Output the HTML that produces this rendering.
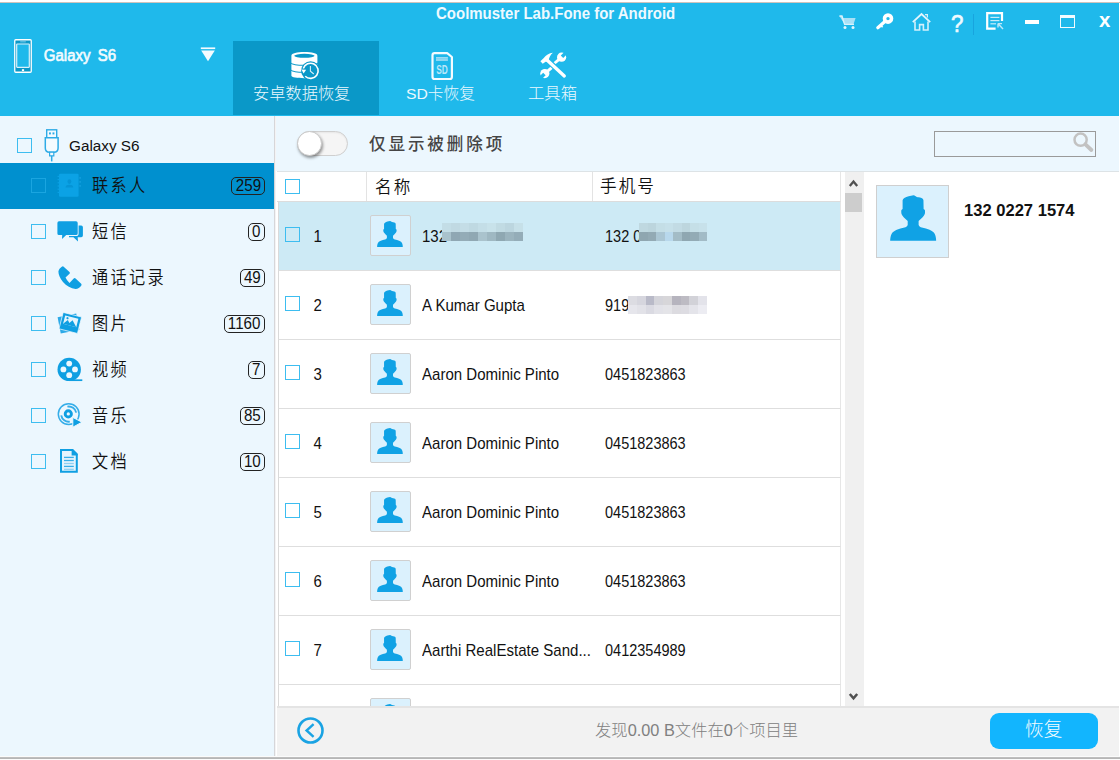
<!DOCTYPE html>
<html lang="zh-CN">
<head>
<meta charset="utf-8">
<title>Coolmuster Lab.Fone for Android</title>
<style>
*{box-sizing:border-box;margin:0;padding:0}
html,body{width:1120px;height:760px;overflow:hidden;background:#fff}
body{position:relative;font-family:"Liberation Sans","Noto Sans CJK SC",sans-serif;font-size:15px;color:#111}
.abs{position:absolute}
.t{position:absolute;white-space:nowrap;line-height:1}
.cjk{font-family:"Liberation Sans","Noto Sans CJK SC",sans-serif}
svg{position:absolute;overflow:visible}
/* frame */
#topline{left:0;top:2px;width:1120px;height:1px;background:#cfc3bc}
#header{left:0;top:3px;width:1119px;height:113px;background:#1fb9eb}
#tabactive{left:233px;top:41px;width:146px;height:74px;background:#0a98c8}
#sidebar{left:0;top:116px;width:274px;height:640px;background:#ecf7fe}
#sideborder{left:274px;top:116px;width:2px;height:640px;background:linear-gradient(90deg,#d6d6d9 0,#d6d6d9 50%,#f3f3f4 50%,#f3f3f4 100%)}
#toolbar{left:276px;top:116px;width:843px;height:55px;background:#ecf7fe}
#toolline{left:277px;top:171px;width:842px;height:1px;background:#dde3e6}
#footer{left:277px;top:706px;width:842px;height:50px;background:#f2f2f2;border-top:2px solid #e4e4e4}
#botline{left:0;top:757px;width:1120px;height:2px;background:linear-gradient(#c2c2c2,#b2b2b2);box-shadow:0 0 1px #d0d0d0}
/* sidebar */
.cb{position:absolute;width:15px;height:15px;border:1px solid #3dbdf0;background:transparent}
.cbw{background:transparent}
#sel{left:0;top:163px;width:274px;height:46px;background:#0090cf}
.lab{position:absolute;left:92.2px;font-size:16px;font-weight:350;letter-spacing:2.3px;line-height:1;white-space:nowrap;color:#111;transform-origin:0 0;transform:scale(1.011,1.14)}
.badge{position:absolute;right:855px;height:18px;border:1px solid #222;border-radius:5px;font-size:15px;line-height:16px;padding:0 3.4px;color:#111;white-space:nowrap}.badge span{display:inline-block;position:relative;top:.8px;transform:scale(1.01,1.095);transform-origin:50% 55%}
/* table */
#thead{left:277px;top:172px;width:564px;height:30px;background:#fff;border-bottom:1px solid #dcdcdc;border-right:1px solid #e6e6e6}
.vsep{position:absolute;top:172px;width:1px;height:29px;background:#e3e3e3}
.row{position:absolute;left:278px;width:563px;height:69px;border-bottom:1px solid #dedede;border-left:1px solid #dadada;border-right:1px solid #e6e6e6;background:#fff}
.row.sel{background:#cdeaf5}
.row .cb{left:6px;top:25px}
.row .num{position:absolute;left:34.5px;top:25.5px;font-size:15px;line-height:1;color:#111;transform-origin:0 0;transform:scale(1,1.093)}
.ava{position:absolute;left:91px;top:13px;width:41px;height:41px;border:1px solid #d0d0d0;background:#dbf1fd;border-radius:2px}
.ava svg{left:6px;top:5px}
.row .nm{position:absolute;left:143px;top:25.5px;font-size:15px;line-height:1;white-space:nowrap;color:#111;transform-origin:0 0;transform:scale(1.003,1.093)}
.row .ph{position:absolute;left:325.5px;top:25.5px;font-size:15px;line-height:1;white-space:nowrap;color:#111;transform-origin:0 0;transform:scale(.967,1.093)}
#scroll{left:845px;top:172px;width:19px;height:534px;background:#f0f0f0}
#thumb{left:845px;top:193px;width:17px;height:19px;background:#cdcdcd}
</style>
</head>
<body>
<div id="topline" class="abs"></div>
<div id="header" class="abs"></div>
<div id="tabactive" class="abs"></div>
<div id="sidebar" class="abs"></div>
<div id="sideborder" class="abs"></div>
<div id="toolbar" class="abs"></div>
<div id="toolline" class="abs"></div>
<div class="abs" id="toggle" style="left:297px;top:131px;width:51px;height:25px;border-radius:13px;background:#f5f5f5;border:1px solid #cfcfcf;box-shadow:inset 0 1px 2px rgba(0,0,0,.06)"></div>
<div class="abs" id="knob" style="left:297px;top:131px;width:25px;height:25px;border-radius:50%;background:#fff;border:1px solid #c9c9c9;box-shadow:1px 2px 3px rgba(0,0,0,.4)"></div>
<div class="t cjk" id="onlydel" style="transform-origin:0 0;left:368.6px;top:136.2px;transform:scale(1.035,1.07);font-size:16px;font-weight:500;letter-spacing:2.8px;color:#454545">仅显示被删除项</div>
<div class="abs" id="search" style="left:934px;top:131px;width:162px;height:26px;border:1px solid #9a9a9a;background:#ecf7fe"></div>
<svg id="ic-mag" style="left:1073px;top:133px" width="21" height="20" viewBox="0 0 21 20"><circle cx="7.6" cy="6.7" r="6.1" fill="none" stroke="#c2c2c2" stroke-width="2.5"/><path d="M12.4 11.3 L18.4 17" stroke="#c2c2c2" stroke-width="3.8" stroke-linecap="round"/></svg>
<div class="t" id="title" style="transform-origin:0 0;left:435.5px;top:5.1px;transform:scale(.999,1.1);font-size:15px;font-weight:bold;color:#eef9ff">Coolmuster Lab.Fone for Android</div>
<!-- device selector -->
<svg id="ic-phone" style="left:14px;top:39px" width="18" height="34" viewBox="0 0 18 34">
  <rect x="0.75" y="0.75" width="16.5" height="32.5" rx="1" fill="#0a98c8" stroke="#fff" stroke-width="1.3"/>
  <rect x="2.7" y="5" width="12.6" height="23.3" rx="0.5" fill="#1fb9eb" stroke="#d8f1fb" stroke-width="1.2"/>
  <rect x="6.2" y="2.4" width="5.6" height="0.9" fill="#7fd0ee"/>
  <rect x="7.9" y="30.2" width="2.2" height="1.9" fill="#fff"/>
</svg>
<div class="t" id="devname" style="transform-origin:0 0;left:43.8px;top:46.6px;transform:scale(1.0,1.069);font-size:15px;font-weight:normal;color:#f2fbff;word-spacing:3px;-webkit-text-stroke:.6px #f2fbff">Galaxy S6</div>
<svg id="ic-drop" style="left:200px;top:47px" width="16" height="15" viewBox="0 0 16 15">
  <rect x="0.8" y="0.4" width="14.4" height="1.7" fill="#f4fbff"/>
  <path d="M1.2 3.4 H14.8 L8 14.2 Z" fill="#f4fbff"/>
</svg>
<!-- tab 1 icon: database + clock -->
<svg id="ic-db" style="left:291px;top:52px" width="29" height="28" viewBox="0 0 29 28">
  <g fill="#fff">
    <path d="M0.4 3.7 C0.4 1.4 6 0.1 13.4 0.1 C20.8 0.1 26.4 1.4 26.4 3.7 V10.4 C26.4 11.8 20.8 12.8 13.4 12.8 C6 12.8 0.4 11.8 0.4 10.4 Z"/>
    <path d="M0.4 11.4 C0.4 12.8 6 13.8 13.4 13.8 C20.8 13.8 26.4 12.8 26.4 11.4 V17.4 C26.4 18.8 20.8 19.8 13.4 19.8 C6 19.8 0.4 18.8 0.4 17.4 Z"/>
    <path d="M0.4 18.4 C0.4 19.8 6 20.8 13.4 20.8 C20.8 20.8 26.4 19.8 26.4 18.4 V23.8 C26.4 25.2 20.8 26.2 13.4 26.2 C6 26.2 0.4 25.2 0.4 23.8 Z"/>
  </g>
  <ellipse cx="13.4" cy="3.8" rx="10.2" ry="2" fill="#0a98c8"/>
  <circle cx="19.6" cy="18.8" r="9.5" fill="#0a98c8"/>
  <path d="M12.3 16.6 A7.6 7.6 0 1 1 14.2 24.2" fill="none" stroke="#fff" stroke-width="1.6"/>
  <path d="M10.4 17.6 L15.2 17.8 L12.6 21.4 Z" fill="#fff"/>
  <path d="M19.4 14 V19.2 L22.8 22" fill="none" stroke="#d6eef8" stroke-width="1.1"/>
</svg>
<div class="t cjk" id="tab1" style="transform-origin:0 0;left:253.33px;top:86px;transform:scale(1.014,1);font-size:16px;color:#eaf8fe;font-weight:300">安卓数据恢复</div>
<!-- tab 2 icon: SD card -->
<svg id="ic-sd" style="left:431px;top:52px" width="23" height="28" viewBox="0 0 23 28">
  <path d="M1.5 3.3 Q1.5 1.2 3.6 1.2 H16.2 L20.9 5 V25 Q20.9 27 18.9 27 H3.6 Q1.5 27 1.5 25 Z" fill="none" stroke="#f4fbff" stroke-width="2.2" stroke-linejoin="round"/>
  <rect x="5" y="5.1" width="11.9" height="1.6" fill="#a9e0f6"/>
  <rect x="5" y="7.2" width="11.9" height="1.6" fill="#a9e0f6"/>
  <text x="11.1" y="22.4" font-family="Liberation Sans, sans-serif" font-size="12.6" font-weight="bold" fill="#b9e7f9" text-anchor="middle" textLength="11.6" lengthAdjust="spacingAndGlyphs">SD</text>
</svg>
<div class="t cjk" id="tab2" style="transform-origin:0 0;left:406.06px;top:86.2px;transform:scale(.982,.97);font-size:16px;color:#eaf8fe;font-weight:300">SD卡恢复</div>
<!-- tab 3 icon: tools -->
<svg id="ic-tools" style="left:540px;top:52px" width="27" height="27" viewBox="0 0 27 27">
  <g stroke="#fff" stroke-width="2.9" fill="none">
    <path d="M13.6 12 L20 6.6"/>
    <path d="M12.6 14.8 L6.2 20.4"/>
  </g>
  <circle cx="21.6" cy="5.2" r="4.6" fill="#fff"/>
  <circle cx="4.8" cy="21.6" r="4.6" fill="#fff"/>
  <path d="M22 4.8 L27 -0.2" stroke="#1fb9eb" stroke-width="3.4"/>
  <path d="M4.4 22 L-0.6 27" stroke="#1fb9eb" stroke-width="3.4"/>
  <path d="M8.6 9.4 L24.4 24" stroke="#1fb9eb" stroke-width="5.6" stroke-linecap="butt"/>
  <path d="M7 8 L24.3 24" stroke="#fff" stroke-width="3.3" stroke-linecap="round"/>
  <path d="M0.4 9.3 L2.7 11.8 L5.6 9.8 L8.4 9.4 C8.8 6 10.2 3 12.9 0.7 C9 0.9 6 3.2 3.8 6 Z" fill="#fff"/>
</svg>
<div class="t cjk" id="tab3" style="transform-origin:0 0;left:527.98px;top:86.2px;transform:scale(1.022,.97);font-size:16px;color:#eaf8fe;font-weight:300">工具箱</div>
<!-- window controls -->
<svg id="ic-cart" style="left:839px;top:15px" width="18" height="15" viewBox="0 0 18 15">
  <path d="M0.4 1 H3 L4 3 H16.6 L14.6 9 H5.4 Z" fill="#a9e0f6"/>
  <path d="M0.4 1 H3 L5.6 9.4 H15" fill="none" stroke="#d9f2fc" stroke-width="1.3"/>
  <circle cx="6" cy="12.4" r="1.5" fill="#e4f6fd"/>
  <circle cx="14" cy="12.4" r="1.5" fill="#e4f6fd"/>
</svg>
<svg id="ic-key" style="left:876px;top:13px" width="18" height="17" viewBox="0 0 18 17">
  <circle cx="12" cy="5.6" r="3.5" fill="none" stroke="#fff" stroke-width="3.6"/>
  <path d="M8.6 8.8 L1.8 14.8" stroke="#fff" stroke-width="3.2" stroke-linecap="round"/>
  <path d="M4.6 12 L6.6 14.2" stroke="#fff" stroke-width="1.6"/>
</svg>
<svg id="ic-home" style="left:912px;top:13px" width="19" height="18" viewBox="0 0 19 18">
  <path d="M0.8 9.2 L9.5 1 L18.2 9.2" fill="none" stroke="#e2f5fd" stroke-width="1.8"/>
  <path d="M3 8.6 V17 H7.6 V11.6 H11.4 V17 H16 V8.6" fill="none" stroke="#d4f0fb" stroke-width="1.6"/>
  <path d="M13 1.6 H15.4 V4.6" fill="none" stroke="#d4f0fb" stroke-width="1.2"/>
</svg>
<div class="t" id="qmark" style="transform-origin:0 0;left:951.16px;top:12.07px;transform:scale(1.116,1.164);font-size:20px;color:#eefaff;-webkit-text-stroke:.55px #eefaff">?</div>
<div class="abs" style="left:973px;top:14px;width:1px;height:21px;background:#18a4de"></div>
<svg id="ic-fb" style="left:986px;top:12px" width="18" height="18" viewBox="0 0 18 18">
  <path d="M16 9 V1.2 H1.2 V16.6 H9.6" fill="none" stroke="#fff" stroke-width="2.2"/>
  <g stroke="#c9ecf9" stroke-width="1.2"><path d="M4.4 5.4 H13.4"/><path d="M4.4 8.6 H13.4"/><path d="M4.4 11.8 H10"/></g>
  <path d="M12 11.6 H16 M12 11.6 V15.6 M12.4 12 L17 17" stroke="#bfe8f8" stroke-width="1.4" fill="none"/>
</svg>
<div class="abs" id="ic-min" style="left:1025px;top:20px;width:14px;height:4px;background:#fff"></div>
<div class="abs" id="ic-max" style="left:1060px;top:15px;width:15px;height:13px;border:1.5px solid #f2fbff;border-top-width:3px"></div>
<div class="t" id="ic-x" style="transform-origin:0 0;left:1099.14px;top:9.3px;transform:scale(1.023,1.03);font-size:20px;font-weight:bold;color:#fff">x</div>
<div class="cb cbw" style="left:17px;top:138px"></div>
<svg id="ic-usb" style="left:44px;top:129px" width="16" height="33" viewBox="0 0 16 33">
  <rect x="2.7" y="0.8" width="10" height="8" fill="#f4fbff" stroke="#2eabe6" stroke-width="1.4"/>
  <rect x="5" y="3.4" width="1.9" height="2" fill="#2eabe6"/><rect x="8.5" y="3.4" width="1.9" height="2" fill="#2eabe6"/>
  <path d="M1.3 8.8 H14.1 V19 Q14.1 23.2 9.9 23.2 H5.5 Q1.3 23.2 1.3 19 Z" fill="#f4fbff" stroke="#2eabe6" stroke-width="1.5"/>
  <path d="M5.6 23.2 H9.8 V26.8 H5.6 Z" fill="#f4fbff" stroke="#2eabe6" stroke-width="1.2"/>
  <path d="M7.7 26.8 V32.4" stroke="#2eabe6" stroke-width="1.5"/>
</svg>
<div class="t" id="sidegal" style="transform-origin:0 0;left:68.5px;top:138px;transform:scale(1.02,1.03);font-size:15px;color:#111">Galaxy S6</div>
<div id="sel" class="abs"></div>
<div class="cb" style="left:31px;top:178px;border-color:#1aa5e0"></div>
<svg id="ic-contacts" style="left:57px;top:173px" width="24" height="24" viewBox="0 0 24 24">
  <rect x="2" y="0.8" width="19.6" height="23" rx="1.2" fill="#0ba2e5"/>
  <g stroke="#0ba2e5" stroke-width="1.1"><path d="M0.6 3.4 H3"/><path d="M0.6 6.6 H3"/><path d="M0.6 9.8 H3"/><path d="M0.6 13 H3"/><path d="M0.6 16.2 H3"/><path d="M0.6 19.4 H3"/></g>
  <rect x="22.4" y="4" width="1.4" height="1.8" fill="#14a0de"/><rect x="22.4" y="8" width="1.4" height="1.8" fill="#14a0de"/><rect x="22.4" y="12" width="1.4" height="1.8" fill="#14a0de"/>
  <ellipse cx="12.4" cy="8.6" rx="1.9" ry="2.4" fill="#0594d6"/>
  <path d="M8.6 14.6 C8.6 12.4 10 11.8 12.4 11.8 C14.8 11.8 16.2 12.4 16.2 14.6 Z" fill="#0594d6"/>
</svg>
<div class="lab cjk" style="top:177.4px">联系人</div>
<div class="badge" style="top:176.5px"><span>259</span></div>
<div class="cb" style="left:31px;top:224px;"></div>
<svg id="ic-sms" style="left:57px;top:221px" width="27" height="22" viewBox="0 0 27 22">
  <path d="M12 4.6 H24.2 Q25.9 4.6 25.9 6.2 V14.6 Q25.9 16.2 24.2 16.2 H20.7 L21 20.4 L16.4 16.2 H12 Z" fill="#0f9fe2"/>
  <path d="M2 0.2 H19 Q20.7 0.2 20.7 1.9 V12.4 Q20.7 14.1 19 14.1 H8.8 L5 17.8 L5.4 14.1 H2 Q0.4 14.1 0.4 12.4 V1.9 Q0.4 0.2 2 0.2 Z" fill="#ecf7fe" stroke="#ecf7fe" stroke-width="1.8"/>
  <path d="M2 0.2 H19 Q20.7 0.2 20.7 1.9 V12.4 Q20.7 14.1 19 14.1 H9.2 L5 18 L5.2 14.1 H2 Q0.4 14.1 0.4 12.4 V1.9 Q0.4 0.2 2 0.2 Z" fill="#0f9fe2"/>
</svg>
<div class="lab cjk" style="top:223.4px">短信</div>
<div class="badge" style="top:222.5px"><span>0</span></div>
<div class="cb" style="left:31px;top:270px;"></div>
<svg id="ic-call" style="left:58px;top:266px" width="24" height="24" viewBox="0 0 24 24">
  <path d="M5.4 0.4 L11.5 6 Q12.4 6.9 11.5 7.8 L7.5 11.4 Q9 14.6 11.5 16.9 L15.7 12.5 Q16.6 11.6 17.6 12.4 L23.2 17.8 Q24 18.8 23.2 19.8 C21.8 21.6 20 23 17.6 23 C13 22.6 8.4 20 5 16 C2 12.4 0.4 8.6 0.4 5.6 C0.6 3.6 2.2 1.8 3.8 0.7 Q4.6 0 5.4 0.4 Z" fill="#0f9fe2"/>
</svg>
<div class="lab cjk" style="top:269.4px">通话记录</div>
<div class="badge" style="top:268.5px"><span>49</span></div>
<div class="cb" style="left:31px;top:316px;"></div>
<svg id="ic-pic" style="left:57px;top:311px" width="26" height="24" viewBox="0 0 26 24">
  <g transform="rotate(-11 11.5 12.5)"><rect x="2" y="4.2" width="19" height="16.6" fill="#2caae8"/></g>
  <g transform="translate(6.2 1.4) rotate(14.3)">
    <rect x="0" y="0" width="19" height="16.9" fill="#0f9fe2" stroke="#ecf7fe" stroke-width="0.7"/>
    <rect x="2.7" y="2.4" width="13.6" height="8.7" fill="#e3f4fd"/>
    <path d="M2.7 11.1 L6.4 6.2 L8.6 8.8 L11 5.2 L16.3 11.1 Z" fill="#0f9fe2"/>
    <circle cx="5.6" cy="4.6" r="1.1" fill="#0f9fe2"/>
  </g>
</svg>
<div class="lab cjk" style="top:315.4px">图片</div>
<div class="badge" style="top:314.5px"><span>1160</span></div>
<div class="cb" style="left:31px;top:362px;"></div>
<svg id="ic-video" style="left:57px;top:357px" width="26" height="25" viewBox="0 0 26 25">
  <circle cx="12.2" cy="12.4" r="11.7" fill="#0f9fe2"/>
  <path d="M12.2 23.2 H25.3" stroke="#0f9fe2" stroke-width="1.7"/>
  <g fill="#ecf7fe"><circle cx="12.2" cy="6.6" r="2.9"/><circle cx="12.2" cy="18.2" r="2.9"/><circle cx="6.4" cy="12.4" r="2.9"/><circle cx="18" cy="12.4" r="2.9"/></g>
</svg>
<div class="lab cjk" style="top:361.4px">视频</div>
<div class="badge" style="top:360.5px"><span>7</span></div>
<div class="cb" style="left:31px;top:408px;"></div>
<svg id="ic-music" style="left:57px;top:403px" width="26" height="25" viewBox="0 0 26 25">
  <circle cx="11.7" cy="11.1" r="10.4" fill="none" stroke="#34ade8" stroke-width="1.5"/>
  <path d="M10.4 3.6 A7.6 7.6 0 0 1 19.2 9.6" fill="none" stroke="#34ade8" stroke-width="1.9"/>
  <path d="M4.2 12.4 A7.6 7.6 0 0 0 12.8 18.6" fill="none" stroke="#34ade8" stroke-width="1.9"/>
  <circle cx="11.3" cy="10.9" r="3.1" fill="none" stroke="#0f9fe2" stroke-width="2.9"/>
  <path d="M15.8 14.4 L25 19.2 L15.8 24.2 Z" fill="#0f9fe2" stroke="#ecf7fe" stroke-width="1"/>
</svg>
<div class="lab cjk" style="top:407.4px">音乐</div>
<div class="badge" style="top:406.5px"><span>85</span></div>
<div class="cb" style="left:31px;top:454px;"></div>
<svg id="ic-doc" style="left:59px;top:449px" width="20" height="24" viewBox="0 0 20 24">
  <path d="M2 1 H13.6 L17.8 5.2 V22.8 H2 Z" fill="#e4f4fd" stroke="#0f9fe2" stroke-width="2"/>
  <path d="M12.6 0.6 H13.8 L18.4 5.2 V6.6 H12.6 Z" fill="#0f9fe2"/>
  <g stroke="#38aee8" stroke-width="1.3"><path d="M5 8.4 H14.8"/><path d="M5 11.5 H14.8"/><path d="M5 17.4 H14.8"/></g>
  <g stroke="#8fd0f2" stroke-width="1.3"><path d="M5 14.5 H14.8"/><path d="M5 20.3 H14.8"/></g>
</svg>
<div class="lab cjk" style="top:453.4px">文档</div>
<div class="badge" style="top:452.5px"><span>10</span></div>

<div id="thead" class="abs"></div>
<div class="vsep" style="left:366px"></div><div class="vsep" style="left:592px"></div>
<div class="cb cbw" style="left:285px;top:179px"></div>
<div class="t cjk" id="mc" style="transform-origin:0 0;left:374.52px;top:178.9px;transform:scale(1.037,1.08);font-weight:350;font-size:16px;letter-spacing:2px;color:#111">名称</div>
<div class="t cjk" id="sjh" style="transform-origin:0 0;left:600.22px;top:178.4px;transform:scale(1.037,1.08);font-weight:350;font-size:16px;letter-spacing:2px;color:#111">手机号</div>
<div class="abs" id="tclip" style="left:0;top:202px;width:845px;height:504px;overflow:hidden">
<div class="row sel" style="top:0px"><div class="cb"></div><div class="num">1</div><div class="ava"><svg width="26" height="26.2" viewBox="0 0 26 25.7" preserveAspectRatio="none"><path d="M8 1.7 C9.4 0.6 11.4 0.4 13.1 0.1 C14 0.1 14.4 0.9 15 1.1 C15.8 1.3 16.6 1.2 17.3 1.5 C18.2 1.8 18.6 2.2 18.7 3 L18.8 7.8 C19.4 8 19.7 8.6 19.6 9.4 C19.6 10.2 19.5 10.8 19 11.4 C18 12.8 17 13.6 16 14.5 L16 16.8 C16.4 17.6 17 18 17.8 18.2 C19.4 18.6 20.8 18.9 22.1 19.4 C23.6 20 24.6 20.8 25.1 21.9 C25.6 23 25.8 24.4 25.8 25.6 L0.1 25.6 C0.1 24.4 0.3 23 0.8 21.9 C1.3 20.8 2.3 20 3.8 19.4 C5.1 18.9 6.5 18.6 8.1 18.2 C8.9 18 9.5 17.6 9.9 16.8 L9.9 14.5 C8.9 13.6 7.9 12.8 6.9 11.4 C6.4 10.8 6.3 10.2 6.3 9.4 C6.2 8.6 6.5 8 7.05 7.8 L7.05 3 C7.2 2.4 7.5 2 8 1.7 Z" fill="#10a2e5"/></svg></div><div class="nm">132</div><div class="ph">132 0</div></div>
<div class="row" style="top:69px"><div class="cb cbw"></div><div class="num">2</div><div class="ava"><svg width="26" height="26.2" viewBox="0 0 26 25.7" preserveAspectRatio="none"><path d="M8 1.7 C9.4 0.6 11.4 0.4 13.1 0.1 C14 0.1 14.4 0.9 15 1.1 C15.8 1.3 16.6 1.2 17.3 1.5 C18.2 1.8 18.6 2.2 18.7 3 L18.8 7.8 C19.4 8 19.7 8.6 19.6 9.4 C19.6 10.2 19.5 10.8 19 11.4 C18 12.8 17 13.6 16 14.5 L16 16.8 C16.4 17.6 17 18 17.8 18.2 C19.4 18.6 20.8 18.9 22.1 19.4 C23.6 20 24.6 20.8 25.1 21.9 C25.6 23 25.8 24.4 25.8 25.6 L0.1 25.6 C0.1 24.4 0.3 23 0.8 21.9 C1.3 20.8 2.3 20 3.8 19.4 C5.1 18.9 6.5 18.6 8.1 18.2 C8.9 18 9.5 17.6 9.9 16.8 L9.9 14.5 C8.9 13.6 7.9 12.8 6.9 11.4 C6.4 10.8 6.3 10.2 6.3 9.4 C6.2 8.6 6.5 8 7.05 7.8 L7.05 3 C7.2 2.4 7.5 2 8 1.7 Z" fill="#10a2e5"/></svg></div><div class="nm">A Kumar Gupta</div><div class="ph">919</div></div>
<div class="row" style="top:138px"><div class="cb cbw"></div><div class="num">3</div><div class="ava"><svg width="26" height="26.2" viewBox="0 0 26 25.7" preserveAspectRatio="none"><path d="M8 1.7 C9.4 0.6 11.4 0.4 13.1 0.1 C14 0.1 14.4 0.9 15 1.1 C15.8 1.3 16.6 1.2 17.3 1.5 C18.2 1.8 18.6 2.2 18.7 3 L18.8 7.8 C19.4 8 19.7 8.6 19.6 9.4 C19.6 10.2 19.5 10.8 19 11.4 C18 12.8 17 13.6 16 14.5 L16 16.8 C16.4 17.6 17 18 17.8 18.2 C19.4 18.6 20.8 18.9 22.1 19.4 C23.6 20 24.6 20.8 25.1 21.9 C25.6 23 25.8 24.4 25.8 25.6 L0.1 25.6 C0.1 24.4 0.3 23 0.8 21.9 C1.3 20.8 2.3 20 3.8 19.4 C5.1 18.9 6.5 18.6 8.1 18.2 C8.9 18 9.5 17.6 9.9 16.8 L9.9 14.5 C8.9 13.6 7.9 12.8 6.9 11.4 C6.4 10.8 6.3 10.2 6.3 9.4 C6.2 8.6 6.5 8 7.05 7.8 L7.05 3 C7.2 2.4 7.5 2 8 1.7 Z" fill="#10a2e5"/></svg></div><div class="nm">Aaron Dominic Pinto</div><div class="ph">0451823863</div></div>
<div class="row" style="top:207px"><div class="cb cbw"></div><div class="num">4</div><div class="ava"><svg width="26" height="26.2" viewBox="0 0 26 25.7" preserveAspectRatio="none"><path d="M8 1.7 C9.4 0.6 11.4 0.4 13.1 0.1 C14 0.1 14.4 0.9 15 1.1 C15.8 1.3 16.6 1.2 17.3 1.5 C18.2 1.8 18.6 2.2 18.7 3 L18.8 7.8 C19.4 8 19.7 8.6 19.6 9.4 C19.6 10.2 19.5 10.8 19 11.4 C18 12.8 17 13.6 16 14.5 L16 16.8 C16.4 17.6 17 18 17.8 18.2 C19.4 18.6 20.8 18.9 22.1 19.4 C23.6 20 24.6 20.8 25.1 21.9 C25.6 23 25.8 24.4 25.8 25.6 L0.1 25.6 C0.1 24.4 0.3 23 0.8 21.9 C1.3 20.8 2.3 20 3.8 19.4 C5.1 18.9 6.5 18.6 8.1 18.2 C8.9 18 9.5 17.6 9.9 16.8 L9.9 14.5 C8.9 13.6 7.9 12.8 6.9 11.4 C6.4 10.8 6.3 10.2 6.3 9.4 C6.2 8.6 6.5 8 7.05 7.8 L7.05 3 C7.2 2.4 7.5 2 8 1.7 Z" fill="#10a2e5"/></svg></div><div class="nm">Aaron Dominic Pinto</div><div class="ph">0451823863</div></div>
<div class="row" style="top:276px"><div class="cb cbw"></div><div class="num">5</div><div class="ava"><svg width="26" height="26.2" viewBox="0 0 26 25.7" preserveAspectRatio="none"><path d="M8 1.7 C9.4 0.6 11.4 0.4 13.1 0.1 C14 0.1 14.4 0.9 15 1.1 C15.8 1.3 16.6 1.2 17.3 1.5 C18.2 1.8 18.6 2.2 18.7 3 L18.8 7.8 C19.4 8 19.7 8.6 19.6 9.4 C19.6 10.2 19.5 10.8 19 11.4 C18 12.8 17 13.6 16 14.5 L16 16.8 C16.4 17.6 17 18 17.8 18.2 C19.4 18.6 20.8 18.9 22.1 19.4 C23.6 20 24.6 20.8 25.1 21.9 C25.6 23 25.8 24.4 25.8 25.6 L0.1 25.6 C0.1 24.4 0.3 23 0.8 21.9 C1.3 20.8 2.3 20 3.8 19.4 C5.1 18.9 6.5 18.6 8.1 18.2 C8.9 18 9.5 17.6 9.9 16.8 L9.9 14.5 C8.9 13.6 7.9 12.8 6.9 11.4 C6.4 10.8 6.3 10.2 6.3 9.4 C6.2 8.6 6.5 8 7.05 7.8 L7.05 3 C7.2 2.4 7.5 2 8 1.7 Z" fill="#10a2e5"/></svg></div><div class="nm">Aaron Dominic Pinto</div><div class="ph">0451823863</div></div>
<div class="row" style="top:345px"><div class="cb cbw"></div><div class="num">6</div><div class="ava"><svg width="26" height="26.2" viewBox="0 0 26 25.7" preserveAspectRatio="none"><path d="M8 1.7 C9.4 0.6 11.4 0.4 13.1 0.1 C14 0.1 14.4 0.9 15 1.1 C15.8 1.3 16.6 1.2 17.3 1.5 C18.2 1.8 18.6 2.2 18.7 3 L18.8 7.8 C19.4 8 19.7 8.6 19.6 9.4 C19.6 10.2 19.5 10.8 19 11.4 C18 12.8 17 13.6 16 14.5 L16 16.8 C16.4 17.6 17 18 17.8 18.2 C19.4 18.6 20.8 18.9 22.1 19.4 C23.6 20 24.6 20.8 25.1 21.9 C25.6 23 25.8 24.4 25.8 25.6 L0.1 25.6 C0.1 24.4 0.3 23 0.8 21.9 C1.3 20.8 2.3 20 3.8 19.4 C5.1 18.9 6.5 18.6 8.1 18.2 C8.9 18 9.5 17.6 9.9 16.8 L9.9 14.5 C8.9 13.6 7.9 12.8 6.9 11.4 C6.4 10.8 6.3 10.2 6.3 9.4 C6.2 8.6 6.5 8 7.05 7.8 L7.05 3 C7.2 2.4 7.5 2 8 1.7 Z" fill="#10a2e5"/></svg></div><div class="nm">Aaron Dominic Pinto</div><div class="ph">0451823863</div></div>
<div class="row" style="top:414px"><div class="cb cbw"></div><div class="num">7</div><div class="ava"><svg width="26" height="26.2" viewBox="0 0 26 25.7" preserveAspectRatio="none"><path d="M8 1.7 C9.4 0.6 11.4 0.4 13.1 0.1 C14 0.1 14.4 0.9 15 1.1 C15.8 1.3 16.6 1.2 17.3 1.5 C18.2 1.8 18.6 2.2 18.7 3 L18.8 7.8 C19.4 8 19.7 8.6 19.6 9.4 C19.6 10.2 19.5 10.8 19 11.4 C18 12.8 17 13.6 16 14.5 L16 16.8 C16.4 17.6 17 18 17.8 18.2 C19.4 18.6 20.8 18.9 22.1 19.4 C23.6 20 24.6 20.8 25.1 21.9 C25.6 23 25.8 24.4 25.8 25.6 L0.1 25.6 C0.1 24.4 0.3 23 0.8 21.9 C1.3 20.8 2.3 20 3.8 19.4 C5.1 18.9 6.5 18.6 8.1 18.2 C8.9 18 9.5 17.6 9.9 16.8 L9.9 14.5 C8.9 13.6 7.9 12.8 6.9 11.4 C6.4 10.8 6.3 10.2 6.3 9.4 C6.2 8.6 6.5 8 7.05 7.8 L7.05 3 C7.2 2.4 7.5 2 8 1.7 Z" fill="#10a2e5"/></svg></div><div class="nm">Aarthi RealEstate Sand...</div><div class="ph">0412354989</div></div>
<div class="row" style="top:483px"><div class="ava"><svg width="26" height="26.2" viewBox="0 0 26 25.7" preserveAspectRatio="none"><path d="M8 1.7 C9.4 0.6 11.4 0.4 13.1 0.1 C14 0.1 14.4 0.9 15 1.1 C15.8 1.3 16.6 1.2 17.3 1.5 C18.2 1.8 18.6 2.2 18.7 3 L18.8 7.8 C19.4 8 19.7 8.6 19.6 9.4 C19.6 10.2 19.5 10.8 19 11.4 C18 12.8 17 13.6 16 14.5 L16 16.8 C16.4 17.6 17 18 17.8 18.2 C19.4 18.6 20.8 18.9 22.1 19.4 C23.6 20 24.6 20.8 25.1 21.9 C25.6 23 25.8 24.4 25.8 25.6 L0.1 25.6 C0.1 24.4 0.3 23 0.8 21.9 C1.3 20.8 2.3 20 3.8 19.4 C5.1 18.9 6.5 18.6 8.1 18.2 C8.9 18 9.5 17.6 9.9 16.8 L9.9 14.5 C8.9 13.6 7.9 12.8 6.9 11.4 C6.4 10.8 6.3 10.2 6.3 9.4 C6.2 8.6 6.5 8 7.05 7.8 L7.05 3 C7.2 2.4 7.5 2 8 1.7 Z" fill="#10a2e5"/></svg></div></div>
</div>
<svg id="blur1" style="left:442px;top:223px" width="81" height="18" viewBox="0 0 81 18" shape-rendering="crispEdges"><rect x="0.00" y="0.00" width="9.30" height="9.30" fill="#c3dde6"/><rect x="9.00" y="0.00" width="9.30" height="9.30" fill="#c0d9e2"/><rect x="18.00" y="0.00" width="9.30" height="9.30" fill="#c4dde6"/><rect x="27.00" y="0.00" width="9.30" height="9.30" fill="#bfd9e2"/><rect x="36.00" y="0.00" width="9.30" height="9.30" fill="#c4dee7"/><rect x="45.00" y="0.00" width="9.30" height="9.30" fill="#c8e2ea"/><rect x="54.00" y="0.00" width="9.30" height="9.30" fill="#c1dbe3"/><rect x="63.00" y="0.00" width="9.30" height="9.30" fill="#bcd6df"/><rect x="72.00" y="0.00" width="9.30" height="9.30" fill="#c6e0e8"/><rect x="0.00" y="9.00" width="9.30" height="9.30" fill="#a9c2cc"/><rect x="9.00" y="9.00" width="9.30" height="9.30" fill="#8fa7b3"/><rect x="18.00" y="9.00" width="9.30" height="9.30" fill="#94acb7"/><rect x="27.00" y="9.00" width="9.30" height="9.30" fill="#90a8b3"/><rect x="36.00" y="9.00" width="9.30" height="9.30" fill="#aac3cd"/><rect x="45.00" y="9.00" width="9.30" height="9.30" fill="#9fb8c2"/><rect x="54.00" y="9.00" width="9.30" height="9.30" fill="#8fa8b2"/><rect x="63.00" y="9.00" width="9.30" height="9.30" fill="#9bb4be"/><rect x="72.00" y="9.00" width="9.30" height="9.30" fill="#94adb8"/></svg>
<svg id="blur2" style="left:639px;top:223px" width="68" height="18" viewBox="0 0 68 18" shape-rendering="crispEdges"><rect x="0.00" y="0.00" width="8.80" height="9.30" fill="#bfd8e0"/><rect x="8.50" y="0.00" width="8.80" height="9.30" fill="#bcd5dd"/><rect x="17.00" y="0.00" width="8.80" height="9.30" fill="#c4dee6"/><rect x="25.50" y="0.00" width="8.80" height="9.30" fill="#c6e0e9"/><rect x="34.00" y="0.00" width="8.80" height="9.30" fill="#c2dbe4"/><rect x="42.50" y="0.00" width="8.80" height="9.30" fill="#bdd6de"/><rect x="51.00" y="0.00" width="8.80" height="9.30" fill="#c5dfe7"/><rect x="59.50" y="0.00" width="8.80" height="9.30" fill="#c7e1ea"/><rect x="0.00" y="9.00" width="8.80" height="9.30" fill="#8fa6b0"/><rect x="8.50" y="9.00" width="8.80" height="9.30" fill="#93aab4"/><rect x="17.00" y="9.00" width="8.80" height="9.30" fill="#abc6d3"/><rect x="25.50" y="9.00" width="8.80" height="9.30" fill="#b8d8ec"/><rect x="34.00" y="9.00" width="8.80" height="9.30" fill="#a3bcc6"/><rect x="42.50" y="9.00" width="8.80" height="9.30" fill="#8fa7b1"/><rect x="51.00" y="9.00" width="8.80" height="9.30" fill="#93abb5"/><rect x="59.50" y="9.00" width="8.80" height="9.30" fill="#a2bbc6"/></svg>
<svg id="blur3" style="left:628px;top:296px" width="79" height="18" viewBox="0 0 79 18" shape-rendering="crispEdges"><rect x="0.00" y="0.00" width="9.08" height="9.30" fill="#dcdce2"/><rect x="8.78" y="0.00" width="9.08" height="9.30" fill="#d6d6de"/><rect x="17.56" y="0.00" width="9.08" height="9.30" fill="#b9bac8"/><rect x="26.33" y="0.00" width="9.08" height="9.30" fill="#d4d4da"/><rect x="35.11" y="0.00" width="9.08" height="9.30" fill="#d7d6d9"/><rect x="43.89" y="0.00" width="9.08" height="9.30" fill="#b6b4be"/><rect x="52.67" y="0.00" width="9.08" height="9.30" fill="#bdbbc3"/><rect x="61.44" y="0.00" width="9.08" height="9.30" fill="#d2d2d8"/><rect x="70.22" y="0.00" width="9.08" height="9.30" fill="#e3e3ea"/><rect x="0.00" y="9.00" width="9.08" height="9.30" fill="#e6e6ec"/><rect x="8.78" y="9.00" width="9.08" height="9.30" fill="#e2e2e8"/><rect x="17.56" y="9.00" width="9.08" height="9.30" fill="#dadae2"/><rect x="26.33" y="9.00" width="9.08" height="9.30" fill="#e2e2e8"/><rect x="35.11" y="9.00" width="9.08" height="9.30" fill="#e4e4e8"/><rect x="43.89" y="9.00" width="9.08" height="9.30" fill="#dcdbe0"/><rect x="52.67" y="9.00" width="9.08" height="9.30" fill="#dddce2"/><rect x="61.44" y="9.00" width="9.08" height="9.30" fill="#e4e4ea"/><rect x="70.22" y="9.00" width="9.08" height="9.30" fill="#ececf2"/></svg>
<div id="scroll" class="abs"></div><div id="thumb" class="abs"></div>
<svg style="left:849px;top:180px" width="9" height="7" viewBox="0 0 9 7"><path d="M0.8 6 L4.5 1.6 L8.2 6" fill="none" stroke="#505050" stroke-width="2.3"/></svg>
<svg style="left:849px;top:693.4px" width="9" height="7" viewBox="0 0 9 7"><path d="M0.8 1 L4.5 5.4 L8.2 1" fill="none" stroke="#505050" stroke-width="2.5"/></svg>
<div class="abs" id="bigava" style="left:876px;top:185px;width:73px;height:73px;border:1px solid #cfcfcf;background:#dbf1fd"><svg style="left:13px;top:9px" width="46.5" height="46" viewBox="0 0 26 25.7" preserveAspectRatio="none"><path d="M8 1.7 C9.4 0.6 11.4 0.4 13.1 0.1 C14 0.1 14.4 0.9 15 1.1 C15.8 1.3 16.6 1.2 17.3 1.5 C18.2 1.8 18.6 2.2 18.7 3 L18.8 7.8 C19.4 8 19.7 8.6 19.6 9.4 C19.6 10.2 19.5 10.8 19 11.4 C18 12.8 17 13.6 16 14.5 L16 16.8 C16.4 17.6 17 18 17.8 18.2 C19.4 18.6 20.8 18.9 22.1 19.4 C23.6 20 24.6 20.8 25.1 21.9 C25.6 23 25.8 24.4 25.8 25.6 L0.1 25.6 C0.1 24.4 0.3 23 0.8 21.9 C1.3 20.8 2.3 20 3.8 19.4 C5.1 18.9 6.5 18.6 8.1 18.2 C8.9 18 9.5 17.6 9.9 16.8 L9.9 14.5 C8.9 13.6 7.9 12.8 6.9 11.4 C6.4 10.8 6.3 10.2 6.3 9.4 C6.2 8.6 6.5 8 7.05 7.8 L7.05 3 C7.2 2.4 7.5 2 8 1.7 Z" fill="#10a2e5"/></svg></div>
<div class="t" id="bignum" style="transform-origin:0 0;left:963.6px;top:201.2px;transform:scale(1.104,1.12);font-size:15px;font-weight:bold;color:#111">132 0227 1574</div>
<div id="footer" class="abs"></div>
<svg id="ic-back" style="left:297px;top:717px" width="27" height="27" viewBox="0 0 27 27"><circle cx="13.5" cy="13.5" r="12" fill="none" stroke="#1aa3e3" stroke-width="2.6"/><path d="M16.6 7.2 L9.6 13.5 L16.6 19.8" fill="none" stroke="#1aa3e3" stroke-width="2.4"/></svg>
<div class="t cjk" id="found" style="transform-origin:0 0;left:594.69px;top:722.5px;transform:scale(1.02,1.017);font-size:16px;font-weight:300;color:#808080">发现0.00 B文件在0个项目里</div>
<div class="abs" id="btn" style="left:990px;top:713px;width:108px;height:36px;border-radius:9px;background:#12b5fe"></div>
<div class="t cjk" id="btnt" style="transform-origin:0 0;left:1024.96px;top:720.4px;transform:scale(1.038,1.06);font-size:18px;color:#f2fbff;font-weight:300">恢复</div>
<div id="botline" class="abs"></div>
</body>
</html>
